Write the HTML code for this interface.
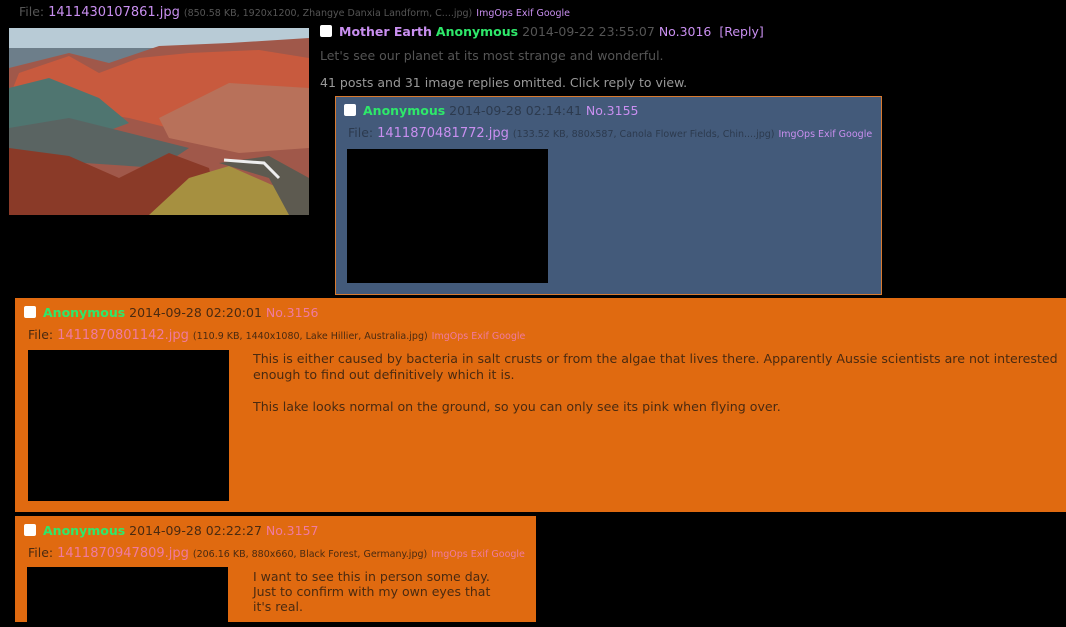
<!DOCTYPE html>
<html><head><meta charset="utf-8"><style>
*{margin:0;padding:0;box-sizing:border-box}
body{width:1066px;height:622px;background:#000;font-family:"DejaVu Sans","Liberation Sans",sans-serif;font-size:12.5px;color:#666;position:relative;overflow:hidden}
.a{position:absolute;white-space:nowrap}
.pl{color:#c98ff0}
.sm{font-size:9.5px}
.g{color:#2ee86a;font-weight:bold}
.cb{display:inline-block;width:12px;height:12px;background:#fff;border-radius:2px;vertical-align:-1px;margin-right:7px}
.blk{position:absolute;background:#000}
.or{position:absolute;background:#e06a10}
.pk{color:#f07aa0}
.dk{color:#4a2a10}
</style></head><body>
<div class="a" style="left:19px;top:4px;color:#555">File: <span class="pl" style="font-size:13px">1411430107861.jpg</span> <span class="sm" style="color:#555">(850.58 KB, 1920x1200, Zhangye Danxia Landform, C....jpg)</span> <span class="sm pl">ImgOps Exif Google</span></div>
<svg class="a" style="left:9px;top:28px" width="300" height="187" viewBox="0 0 300 187">
<rect width="300" height="187" fill="#b8cbd6"/>
<rect y="20" width="300" height="167" fill="#6d7e8a"/>
<path d="M0 40 L60 25 L100 35 L150 18 L220 15 L300 10 L300 187 L0 187Z" fill="#a0584a"/>
<path d="M10 45 L60 28 L90 45 L130 30 L180 25 L250 22 L300 30 L300 110 L200 110 L120 90 L0 70Z" fill="#c85a3e"/>
<path d="M0 60 L40 50 L90 70 L120 95 L80 110 L0 100Z" fill="#4f7570"/>
<path d="M150 90 L220 55 L300 60 L300 120 L230 125 L160 110Z" fill="#b8715a"/>
<path d="M0 100 L60 90 L140 110 L180 120 L150 140 L0 130Z" fill="#5a6462"/>
<path d="M0 120 L60 128 L110 150 L160 125 L200 140 L210 187 L0 187Z" fill="#8a3a28"/>
<path d="M140 187 L180 150 L220 138 L270 160 L285 187Z" fill="#a69040"/>
<path d="M210 135 L260 128 L300 150 L300 187 L280 187 L260 150Z" fill="#5d5a50"/>
<path d="M215 132 L255 135 L270 150" stroke="#eee" stroke-width="3" fill="none"/>
</svg>
<div class="a" style="left:320px;top:24px"><span class="cb"></span><span class="pl" style="font-weight:bold">Mother Earth</span> <span class="g">Anonymous</span> <span style="color:#555">2014-09-22 23:55:07</span> <span class="pl">No.3016</span> &nbsp;<span class="pl">[Reply]</span></div>
<div class="a" style="left:320px;top:48px;color:#555">Let's see our planet at its most strange and wonderful.</div>
<div class="a" style="left:320px;top:75px;color:#999">41 posts and 31 image replies omitted. Click reply to view.</div>

<div class="a" style="left:335px;top:96px;width:547px;height:199px;background:#435a7a;border:1px solid #d87a30"></div>
<div class="a" style="left:344px;top:103px"><span class="cb"></span><span class="g">Anonymous</span> <span style="color:#2c3a4e">2014-09-28 02:14:41</span> <span class="pl">No.3155</span></div>
<div class="a" style="left:348px;top:125px;color:#2c3a4e">File: <span class="pl" style="font-size:13px">1411870481772.jpg</span> <span class="sm" style="color:#2c3a4e">(133.52 KB, 880x587, Canola Flower Fields, Chin....jpg)</span> <span class="sm pl">ImgOps Exif Google</span></div>
<div class="blk" style="left:347px;top:149px;width:201px;height:134px"></div>

<div class="or" style="left:15px;top:298px;width:1051px;height:214px"></div>
<div class="a" style="left:24px;top:305px"><span class="cb"></span><span class="g">Anonymous</span> <span class="dk">2014-09-28 02:20:01</span> <span class="pk">No.3156</span></div>
<div class="a dk" style="left:28px;top:327px">File: <span class="pk" style="font-size:13px">1411870801142.jpg</span> <span class="sm">(110.9 KB, 1440x1080, Lake Hillier, Australia.jpg)</span> <span class="sm pk">ImgOps Exif Google</span></div>
<div class="blk" style="left:28px;top:350px;width:201px;height:151px"></div>
<div class="a dk" style="left:253px;top:351px;line-height:16px;font-size:12.6px">This is either caused by bacteria in salt crusts or from the algae that lives there. Apparently Aussie scientists are not interested<br>enough to find out definitively which it is.<br><br>This lake looks normal on the ground, so you can only see its pink when flying over.</div>

<div class="or" style="left:15px;top:516px;width:521px;height:106px"></div>
<div class="a" style="left:24px;top:523px"><span class="cb"></span><span class="g">Anonymous</span> <span class="dk">2014-09-28 02:22:27</span> <span class="pk">No.3157</span></div>
<div class="a dk" style="left:28px;top:545px">File: <span class="pk" style="font-size:13px">1411870947809.jpg</span> <span class="sm">(206.16 KB, 880x660, Black Forest, Germany.jpg)</span> <span class="sm pk">ImgOps Exif Google</span></div>
<div class="blk" style="left:27px;top:567px;width:201px;height:60px"></div>
<div class="a dk" style="left:253px;top:569px;line-height:15px">I want to see this in person some day.<br>Just to confirm with my own eyes that<br>it's real.</div>
</body></html>
